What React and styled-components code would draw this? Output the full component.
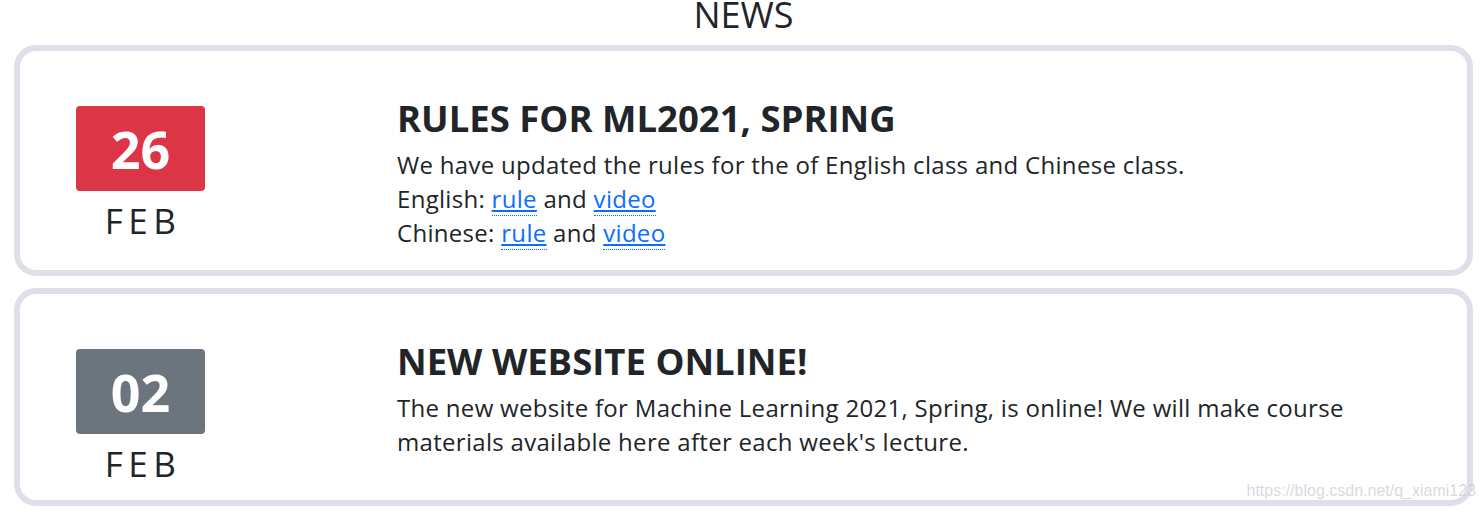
import React from 'react'
import styled, { createGlobalStyle } from 'styled-components'

const COLORS = {
    text: '#212529',
    border: '#dfdfea',
    red: '#dc3545',
    grey: '#6c757d',
    link: '#0d6efd',
}

const GlobalStyle = createGlobalStyle`
    body {
        margin: 0;
        background: #fff;
        font-family: "Open Sans", "Noto Sans", sans-serif;
        color: ${COLORS.text};
    }
`

const Page = styled.div`
    position: relative;
    padding: 0 11px 0 14px;
`
const Heading = styled.h2`
    margin: 0;
    text-align: center;
    font-size: 36px;
    font-weight: 400;
    line-height: 30px;
    height: 45px;
`
const List = styled.div`
    display: flex;
    flex-direction: column;
    gap: 12px;
`
const Card = styled.div`
    display: grid;
    grid-template-columns: 241px 1fr;
    column-gap: 136px;
    border: 6px solid ${COLORS.border};
    border-radius: 22px;
    padding-top: 46px;
`
const DateCol = styled.div`
    display: flex;
    flex-direction: column;
    align-items: center;
    padding-top: 9px;
    padding-bottom: 15px;
`
const Badge = styled.div`
    width: 129px;
    height: 85px;
    border-radius: 4px;
    background: ${(p) => p.color};
    color: #fff;
    font-size: 52px;
    font-weight: 700;
    line-height: 85px;
    text-align: center;
`
const Month = styled.div`
    margin-top: 9px;
    font-size: 35px;
    line-height: 42px;
    letter-spacing: 5.5px;
    padding-left: 5px;
`
const TextCol = styled.div`
    padding-right: 70px;
`
const Title = styled.h3`
    margin: 0 0 8px;
    font-size: 36.5px;
    font-weight: 700;
    line-height: 43px;
`
const Body = styled.p`
    margin: 0 0 20px;
    font-size: 24px;
    letter-spacing: 0.3px;
    line-height: 34px;
`
const Link = styled.a`
    color: ${COLORS.link};
    text-decoration: underline;
    border-bottom: 1px dotted ${COLORS.link};
`
const Watermark = styled.div`
    position: absolute;
    right: 8px;
    bottom: 6px;
    font-family: "Liberation Sans", Arial, sans-serif;
    font-size: 16px;
    color: rgba(200, 200, 210, 0.7);
`

const news = [
    {
        day: '26',
        month: 'FEB',
        color: COLORS.red,
        title: 'RULES FOR ML2021, SPRING',
        body: (
            <>
                We have updated the rules for the of English class and Chinese class.
                <br />
                English: <Link href="#">rule</Link> and <Link href="#">video</Link>
                <br />
                Chinese: <Link href="#">rule</Link> and <Link href="#">video</Link>
            </>
        ),
    },
    {
        day: '02',
        month: 'FEB',
        color: COLORS.grey,
        title: 'NEW WEBSITE ONLINE!',
        body: (
            <>
                The new website for Machine Learning 2021, Spring, is online! We will make course
                materials available here after each week's lecture.
            </>
        ),
    },
]

const App = () => {
    return (
        <Page>
            <GlobalStyle />
            <Heading>NEWS</Heading>
            <List>
                {news.map((item, i) => (
                    <Card key={i}>
                        <DateCol>
                            <Badge color={item.color}>{item.day}</Badge>
                            <Month>{item.month}</Month>
                        </DateCol>
                        <TextCol>
                            <Title>{item.title}</Title>
                            <Body>{item.body}</Body>
                        </TextCol>
                    </Card>
                ))}
            </List>
            <Watermark>https://blog.csdn.net/q_xiami123</Watermark>
        </Page>
    )
}

export default App
